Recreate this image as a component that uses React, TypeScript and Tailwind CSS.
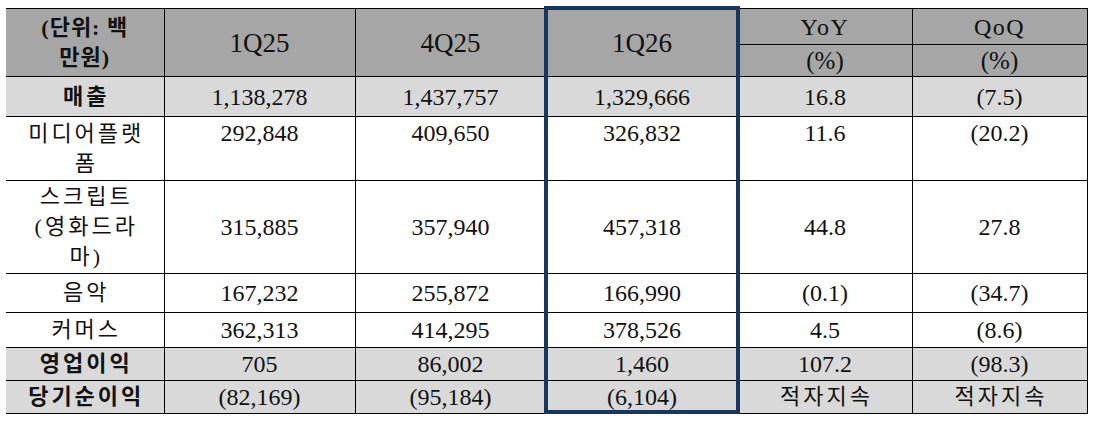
import React from "react";

const font = "font-['Liberation_Serif','Noto_Sans_CJK_KR',serif]";

type Row = {
  label: React.ReactNode;
  bold?: boolean;
  shade?: boolean;
  h: string;
  top?: boolean;
  vals: string[];
};

const rows: Row[] = [
  { label: "매출", bold: true, shade: true, h: "h-[40px]", vals: ["1,138,278", "1,437,757", "1,329,666", "16.8", "(7.5)"] },
  { label: (<>미디어플랫<br />폼</>), h: "h-[64px]", top: true, vals: ["292,848", "409,650", "326,832", "11.6", "(20.2)"] },
  { label: (<>스크립트<br />(영화드라<br />마)</>), h: "h-[93px]", vals: ["315,885", "357,940", "457,318", "44.8", "27.8"] },
  { label: "음악", h: "h-[39px]", vals: ["167,232", "255,872", "166,990", "(0.1)", "(34.7)"] },
  { label: "커머스", h: "h-[35px]", vals: ["362,313", "414,295", "378,526", "4.5", "(8.6)"] },
  { label: "영업이익", bold: true, shade: true, h: "h-[33px]", vals: ["705", "86,002", "1,460", "107.2", "(98.3)"] },
  { label: "당기순이익", bold: true, shade: true, h: "h-[33px]", vals: ["(82,169)", "(95,184)", "(6,104)", "적자지속", "적자지속"] },
];

export default function App() {
  return (
    <div className={`w-[1097px] h-[421px] bg-white pt-[8px] pl-[6px] text-[#111] ${font}`}>
      <div className="relative w-[1081px]">
        <table className="table-fixed border-collapse w-[1081px]">
          <colgroup>
            <col className="w-[158px]" />
            <col className="w-[191px]" />
            <col className="w-[191px]" />
            <col className="w-[192px]" />
            <col className="w-[174px]" />
            <col className="w-[175px]" />
          </colgroup>
          <tbody>
            <tr className="h-[36px] bg-[#a6a6a6]">
              <td rowSpan={2} className="border border-black border-l-0 text-center align-middle p-0 font-bold text-[22px] leading-[30px] tracking-[1px]">
                (단위: 백<br />만원)
              </td>
              <td rowSpan={2} className="border border-black text-center align-middle p-0 text-[27px] leading-[30px]">1Q25</td>
              <td rowSpan={2} className="border border-black text-center align-middle p-0 text-[27px] leading-[30px]">4Q25</td>
              <td rowSpan={2} className="border border-black text-center align-middle p-0 text-[27px] leading-[30px]">1Q26</td>
              <td className="border border-black text-center align-middle p-0 text-[24px] leading-[30px] tracking-[1.5px]">YoY</td>
              <td className="border border-black text-center align-middle p-0 text-[24px] leading-[30px] tracking-[1.5px]">QoQ</td>
            </tr>
            <tr className="h-[32px] bg-[#a6a6a6]">
              <td className="border border-black text-center align-middle p-0 text-[25px] leading-[28px]">(%)</td>
              <td className="border border-black text-center align-middle p-0 text-[25px] leading-[28px]">(%)</td>
            </tr>
            {rows.map((r, i) => {
              const va = r.top ? "align-top pt-[2px]" : "align-middle pt-0";
              return (
                <tr key={i} className={`${r.h} ${r.shade ? "bg-[#d9d9d9]" : "bg-white"}`}>
                  <td
                    className={`border border-black border-l-0 text-center ${va} pl-[3px] pr-0 pb-0 text-[22px] leading-[30px] tracking-[3px] ${
                      r.bold ? "font-bold" : "font-normal"
                    }`}
                  >
                    {r.label}
                  </td>
                  {r.vals.map((v, j) => {
                    const korean = /[가-힣]/.test(v);
                    return (
                      <td
                        key={j}
                        className={`border border-black text-center ${va} pb-0 ${
                          korean ? "text-[22px] tracking-[3px] pl-[3px] pr-0" : "text-[24px] px-0"
                        } leading-[28px]`}
                      >
                        {v}
                      </td>
                    );
                  })}
                </tr>
              );
            })}
          </tbody>
        </table>
        <div className="absolute left-[538px] top-[-2px] w-[196px] h-[408px] border-solid border-[length:4px] border-[#17375e] pointer-events-none" />
      </div>
    </div>
  );
}
